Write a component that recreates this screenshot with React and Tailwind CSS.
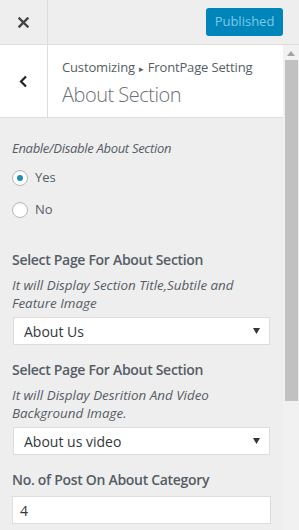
import { useState } from 'react'

const FONT = { fontFamily: '"Open Sans", "Noto Sans", sans-serif' }

function Caret() {
  return (
    <svg width="7" height="6" viewBox="0 0 7 6" className="absolute right-[9px] top-1/2 -translate-y-1/2">
      <polygon points="0,0 7,0 3.5,6" fill="#32373c" />
    </svg>
  )
}

function Radio({ checked, label, onPick }) {
  return (
    <label className="flex h-[32px] cursor-pointer items-center gap-[7px]" onClick={onPick}>
      <span className="flex h-[16px] w-[16px] items-center justify-center rounded-full border border-[#b4b9be] bg-white shadow-[inset_0_1px_2px_rgba(0,0,0,0.07)]">
        {checked && <span className="h-[6px] w-[6px] rounded-full bg-[#1e8cbe]" />}
      </span>
      <span className="text-[13px] text-[#555d66]">{label}</span>
    </label>
  )
}

function Dropdown({ value }) {
  return (
    <div className="relative flex h-[28px] items-center border border-[#ddd] bg-white pl-[10px] text-[14px] text-[#32373c]">
      {value}
      <Caret />
    </div>
  )
}

export default function App() {
  const [on, setOn] = useState(true)

  return (
    <div className="flex h-[530px] w-[299px] flex-col overflow-hidden bg-[#eee]" style={FONT}>
      {/* top bar */}
      <div className="flex h-[45px] shrink-0 items-center border-b border-[#ddd] bg-[#eee]">
        <button className="flex h-full w-[48px] items-center justify-center border-r border-[#ddd]">
          <svg width="11" height="11" viewBox="0 0 11 11">
            <path d="M1.5 1.5 L9.5 9.5 M9.5 1.5 L1.5 9.5" stroke="#444" strokeWidth="2.4" strokeLinecap="square" />
          </svg>
        </button>
        <button className="ml-auto mr-[16px] h-[28px] w-[77px] rounded-[3px] bg-[#0085ba] text-[13px] text-[#7fc9e6]">
          Published
        </button>
      </div>

      <div className="flex min-h-0 flex-1">
        <div className="flex min-w-0 flex-1 flex-col">
          {/* section header */}
          <div className="flex h-[73px] shrink-0 border-b border-[#ddd] bg-white">
            <button className="flex w-[48px] items-center justify-center border-r border-[#ddd]">
              <svg width="9" height="13" viewBox="0 0 9 13">
                <path d="M7 1.5 L2 6.5 L7 11.5" fill="none" stroke="#222" strokeWidth="2.2" />
              </svg>
            </button>
            <div className="flex flex-col pl-[14px] pt-[13px]">
              <span className="text-[13px] leading-[18px] tracking-[-0.15px] text-[#555d66]">
                Customizing<span className="px-[4px] text-[9px]">▸</span>FrontPage Setting
              </span>
              <span className="mt-[3px] text-[20px] font-light leading-[28px] tracking-[-0.5px] text-[#6a7077]">
                About Section
              </span>
            </div>
          </div>

          {/* controls */}
          <div className="flex flex-col px-[12px] pt-[21px] text-[#555d66]">
            <p className="text-[13px] italic leading-[18px] tracking-[-0.3px]">Enable/Disable About Section</p>
            <div className="mt-[5px] flex flex-col">
              <Radio checked={on} label="Yes" onPick={() => setOn(true)} />
              <Radio checked={!on} label="No" onPick={() => setOn(false)} />
            </div>

            <h3 className="mt-[24px] text-[14px] font-semibold leading-[20px] tracking-[-0.3px]">
              Select Page For About Section
            </h3>
            <p className="mt-[6px] text-[13.4px] italic leading-[18px]">
              It will Display Section Title,Subtile and Feature Image
            </p>
            <div className="mt-[5px] px-[1px]">
              <Dropdown value="About Us" />
            </div>

            <h3 className="mt-[15px] text-[14px] font-semibold leading-[20px] tracking-[-0.3px]">
              Select Page For About Section
            </h3>
            <p className="mt-[6px] text-[13.4px] italic leading-[18px]">
              It will Display Desrition And Video Background Image.
            </p>
            <div className="mt-[5px] px-[1px]">
              <Dropdown value="About us video" />
            </div>

            <h3 className="mt-[15px] text-[14px] font-semibold leading-[20px] tracking-[-0.3px]">
              No. of Post On About Category
            </h3>
            <div className="mt-[6px] flex h-[28px] items-center border border-[#ddd] bg-white pl-[7px] text-[14px] text-[#32373c]">
              4
            </div>
          </div>
        </div>

        {/* scrollbar */}
        <div className="flex w-[16px] shrink-0 flex-col items-center bg-[#f1f1f1]">
          <svg width="8" height="5" viewBox="0 0 8 5" className="mt-[6px]">
            <polygon points="0,5 8,5 4,0" fill="#a3a3a3" />
          </svg>
          <div className="mt-[4px] h-[341px] w-[13px] bg-[#c1c1c1]" />
        </div>
      </div>
    </div>
  )
}
